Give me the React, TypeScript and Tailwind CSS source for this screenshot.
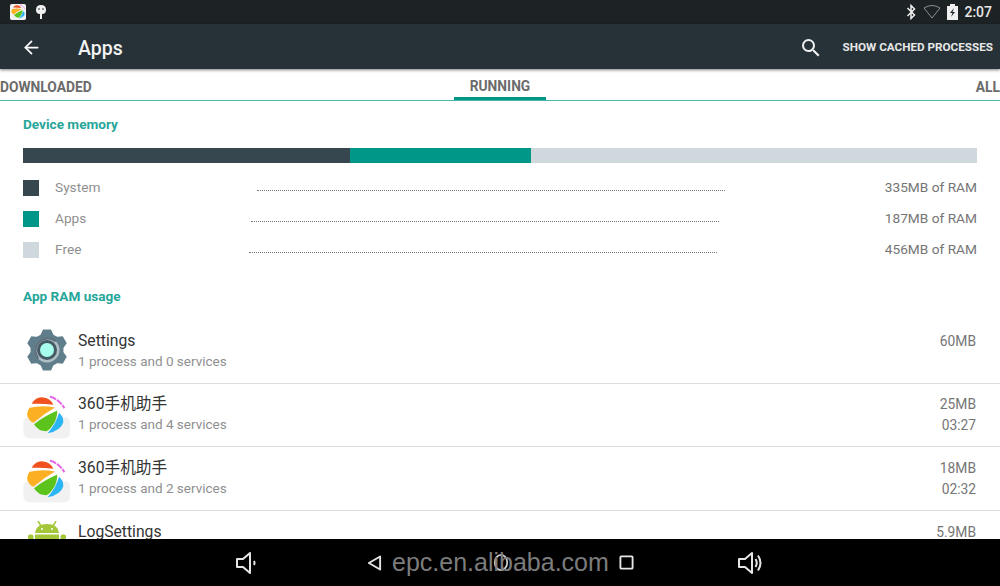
import { ArrowLeft } from 'lucide-react'

function LogoShapes() {
  return (
    <>
      <path d="M95 251 Q108 228 130 232 Q152 234 160 254 Q125 249 95 251 Z" fill="#f0521f" />
      <path d="M89 263 Q125 254 165 262 Q133 280 100 308 Q84 300 81 282 Q82 270 89 263 Z" fill="#fbb024" />
      <path d="M102 312 Q136 286 172 271 Q171 298 160 312 Q150 328 139 333 Q115 333 102 312 Z" fill="#5cc21c" />
      <path d="M143 339 Q168 312 177 278 Q191 290 190 306 Q182 332 143 339 Z" fill="#2cb5f5" />
      <path d="M150 229 Q178 238 193 264" fill="none" stroke="#e469e6" strokeWidth="6" strokeDasharray="20 3" />
    </>
  )
}

function AppLogo() {
  return (
    <svg viewBox="66 222 150 140" className="w-[50px] h-[47px] shrink-0">
      <path d="M90 290 H190 Q210 290 210 310 V335 Q210 355 190 355 H92 Q70 355 70 335 V310 Q70 290 90 290 Z" fill="#f1f1f1" />
      <LogoShapes />
    </svg>
  )
}

function StatusLogo() {
  return (
    <svg viewBox="70 222 130 130" className="w-[16px] h-[16px] shrink-0">
      <rect x="70" y="222" width="130" height="130" rx="14" fill="#f2f2f2" />
      <LogoShapes />
    </svg>
  )
}

function SettingsGear() {
  return (
    <svg viewBox="0 0 44 44" className="w-[44px] h-[44px] shrink-0">
      {[0, 60, 120, 180, 240, 300].map((a) => (
        <path key={a} transform={`rotate(${a} 22 22)`} d="M15 8 L18 1.500 H26 L29 8 Z" fill="#607d8b" />
      ))}
      <circle cx="22" cy="22" r="16.500" fill="#607d8b" />
      <circle cx="22" cy="22" r="12.500" fill="#b0bec5" />
      <path d="M13.200 30.800 A12.500 12.500 0 0 1 30.800 13.200" fill="none" stroke="#5f7480" strokeWidth="2.500" />
      <circle cx="22" cy="22" r="10" fill="#455a64" />
      <circle cx="22" cy="22" r="7" fill="#a7ffeb" />
    </svg>
  )
}

function AndroidHead() {
  return (
    <svg viewBox="0 0 38 19" className="w-[38px] h-[19px] shrink-0">
      <path d="M10 0 L13 5 M28 0 L25 5" stroke="#a4c639" strokeWidth="1.500" />
      <path d="M7 12 Q8 3 19 3 Q30 3 31 12 Z" fill="#a4c639" />
      <circle cx="14" cy="8" r="1" fill="#fff" />
      <circle cx="24" cy="8" r="1" fill="#fff" />
      <rect x="7" y="13.500" width="24" height="5.500" fill="#a4c639" />
      <rect x="0" y="13.500" width="5.500" height="5.500" rx="2" fill="#a4c639" />
      <rect x="32.500" y="13.500" width="5.500" height="5.500" rx="2" fill="#a4c639" />
    </svg>
  )
}

function Speaker({ level }: { level: 'down' | 'up' }) {
  return (
    <svg viewBox="0 0 26 24" fill="none" stroke="#e5e5e5" strokeWidth="2" className="w-[26px] h-[24px]">
      <path d="M2 8 H8 L15 2 V22 L8 16 H2 Z" strokeLinejoin="round" />
      {level === 'down' && <path d="M19 10 Q20 12 19 14" />}
      {level === 'up' && <path d="M18.500 8 Q21 12 18.500 16 M21 4.500 Q26 12 21 19.500" />}
    </svg>
  )
}

function Section({ children }: { children: string }) {
  return <div className="pl-[23px] text-[13.6px] font-bold text-[#26a69a] leading-[16px]">{children}</div>
}

function Legend({ color, label, value, gap }: { color: string; label: string; value: string; gap: string }) {
  return (
    <div className="flex items-center h-[31px] px-[23px] text-[13.7px] text-[#8f8f8f]">
      <div className={`w-[16px] h-[16px] shrink-0 ${color}`} />
      <span className="ml-[16px] w-[50px]">{label}</span>
      <div className={`w-[468px] h-[6px] border-b border-dotted border-[#777] ${gap}`} />
      <span className="ml-auto text-[#757575]">{value}</span>
    </div>
  )
}

function Row({ icon, title, sub, size, time, h, pt, iconClass }: {
  icon: React.ReactNode
  title: string
  sub: string
  size: string
  time?: string
  h: string
  pt: string
  iconClass: string
}) {
  return (
    <div className={`flex items-start shrink-0 overflow-hidden border-b border-[#dedede] ${h} ${pt}`}>
      <div className={`w-[78px] shrink-0 ${iconClass}`}>{icon}</div>
      <div className="flex-1 pt-[1px]">
        <div className="text-[15.7px] leading-[20px] text-[#333] font-['Roboto','Noto_Sans_CJK_SC',sans-serif]">{title}</div>
        <div className="text-[13.5px] leading-[21px] text-[#8f8f8f]">{sub}</div>
      </div>
      <div className="pt-[1px] pr-[24px] text-right text-[13.8px] leading-[21px] text-[#757575]">
        <div>{size}</div>
        {time && <div>{time}</div>}
      </div>
    </div>
  )
}

export default function App() {
  return (
    <div className="relative w-[1000px] h-[586px] overflow-hidden flex flex-col bg-white font-['Roboto',sans-serif]">
      <div className="h-[24px] shrink-0 bg-[#1d2225] flex items-center pl-[10px] pr-[8px] text-white">
        <StatusLogo />
        <svg viewBox="0 0 12 16" className="ml-[9px] w-[12px] h-[16px]">
          <path d="M1 6 Q1 1 6 1 Q11 1 11 6 Q11 10 7 10 V15 H5 V10 Q1 10 1 6 Z" fill="#f0f0f0" />
          <circle cx="4" cy="5" r="0.800" fill="#1d2225" />
          <circle cx="8" cy="5" r="0.800" fill="#1d2225" />
        </svg>
        <div className="ml-auto flex items-center gap-[6px]">
          <svg viewBox="0 0 12 16" fill="none" stroke="#f0f0f0" strokeWidth="1.500" className="w-[12px] h-[16px]">
            <path d="M2.500 4 L9.500 11 L6 14.500 V1.500 L9.500 5 L2.500 12" />
          </svg>
          <svg viewBox="0 0 18 14" fill="none" stroke="#8a8f92" strokeWidth="1" className="w-[18px] h-[14px]">
            <path d="M1 3 Q9 -2 17 3 L9 13 Z" />
          </svg>
          <svg viewBox="0 0 11 16" className="w-[11px] h-[16px]">
            <path d="M3 0 H8 V2 H11 V16 H0 V2 H3 Z" fill="#f0f0f0" />
            <path d="M7 4 L3 9 H5.500 L4 13 L8 8 H5.500 Z" fill="#1d2225" />
          </svg>
          <span className="text-[14px] font-medium text-[#e8e8e8]">2:07</span>
        </div>
      </div>

      <div className="h-[45px] shrink-0 pt-[2px] bg-[#263238] flex items-center text-white shadow-[0_1px_3px_rgba(0,0,0,0.5)] z-10">
        <ArrowLeft className="ml-[21px] w-[21px] h-[21px]" strokeWidth={2} />
        <span className="ml-[36px] mt-[2px] text-[19.5px] font-medium text-[#f2f2f2]">Apps</span>
        <svg viewBox="0 0 24 24" fill="#f0f0f0" className="ml-auto w-[24px] h-[24px]">
          <path d="M15.500 14h-.79l-.28-.27A6.471 6.471 0 0 0 16 9.500 6.500 6.500 0 1 0 9.500 16c1.610 0 3.090-.590 4.230-1.570l.27.28v.79l5 4.990L20.490 19l-4.990-5zm-6 0C7.010 14 5 11.990 5 9.500S7.010 5 9.500 5 14 7.010 14 9.500 11.990 14 9.500 14z" />
        </svg>
        <span className="ml-[20px] pr-[7px] text-[11.7px] font-bold text-[#e8e8e8]">SHOW CACHED PROCESSES</span>
      </div>

      <div className="h-[32px] shrink-0 grid grid-cols-3 items-end border-b border-[#4db6ac] text-[13.8px] font-bold text-[#6b6b6b]">
        <span className="pb-[2px]">DOWNLOADED</span>
        <span className="justify-self-center w-[92px] text-center border-b-[3px] border-[#009688]">RUNNING</span>
        <span className="justify-self-end pb-[2px]">ALL</span>
      </div>

      <div className="pt-[15px]">
        <Section>Device memory</Section>
      </div>
      <div className="mt-[16px] ml-[23px] w-[954px] h-[15px] flex shrink-0">
        <div className="w-[327px] bg-[#37474f]" />
        <div className="w-[181px] bg-[#009688]" />
        <div className="flex-1 bg-[#cfd8dc]" />
      </div>
      <div className="mt-[9px]">
        <Legend color="bg-[#37474f]" label="System" value="335MB of RAM" gap="ml-[152px]" />
        <Legend color="bg-[#009688]" label="Apps" value="187MB of RAM" gap="ml-[146px]" />
        <Legend color="bg-[#cfd8dc]" label="Free" value="456MB of RAM" gap="ml-[144px]" />
      </div>
      <div className="mt-[23px] mb-[16px]">
        <Section>App RAM usage</Section>
      </div>

      <Row h="h-[64px]" pt="pt-[10px]" iconClass="-mt-[2px] pl-[25px]" icon={<SettingsGear />} title="Settings" sub="1 process and 0 services" size="60MB" />
      <Row h="h-[63px]" pt="pt-[9px]" iconClass="mt-[1px] pl-[22px]" icon={<AppLogo />} title="360手机助手" sub="1 process and 4 services" size="25MB" time="03:27" />
      <Row h="h-[64px]" pt="pt-[10px]" iconClass="mt-[1px] pl-[22px]" icon={<AppLogo />} title="360手机助手" sub="1 process and 2 services" size="18MB" time="02:32" />
      <div className="flex items-start h-[29px] shrink-0 overflow-hidden pt-[10px]">
        <div className="w-[78px] shrink-0 pl-[28px]"><AndroidHead /></div>
        <span className="text-[15.7px] leading-[22px] text-[#333]">LogSettings</span>
        <span className="ml-auto pr-[24px] text-[13.8px] leading-[22px] text-[#757575]">5.9MB</span>
      </div>

      <div className="absolute left-0 right-0 bottom-0 h-[47px] bg-black flex items-center">
        <div className="ml-[235px]"><Speaker level="down" /></div>
        <svg viewBox="0 0 16 18" fill="none" stroke="#e5e5e5" strokeWidth="2" className="ml-[106px] w-[15px] h-[18px]">
          <path d="M14 2 L2 9 L14 16 Z" strokeLinejoin="round" />
        </svg>
        <svg viewBox="0 0 18 20" fill="none" stroke="#d0d0d0" strokeWidth="2" className="ml-[111px] w-[16px] h-[19px]">
          <ellipse cx="9" cy="10" rx="7" ry="8.500" />
        </svg>
        <svg viewBox="0 0 16 16" fill="none" stroke="#e5e5e5" strokeWidth="2" className="ml-[110px] w-[15px] h-[15px]">
          <rect x="1.500" y="1.500" width="13" height="13" rx="1" />
        </svg>
        <div className="ml-[103px]"><Speaker level="up" /></div>
      </div>
      <div className="absolute left-[392px] top-[546px] font-['Liberation_Sans',sans-serif] text-[25px] leading-[32px] text-[#7c7c7c]">
        epc.en.alibaba.com
      </div>
    </div>
  )
}
